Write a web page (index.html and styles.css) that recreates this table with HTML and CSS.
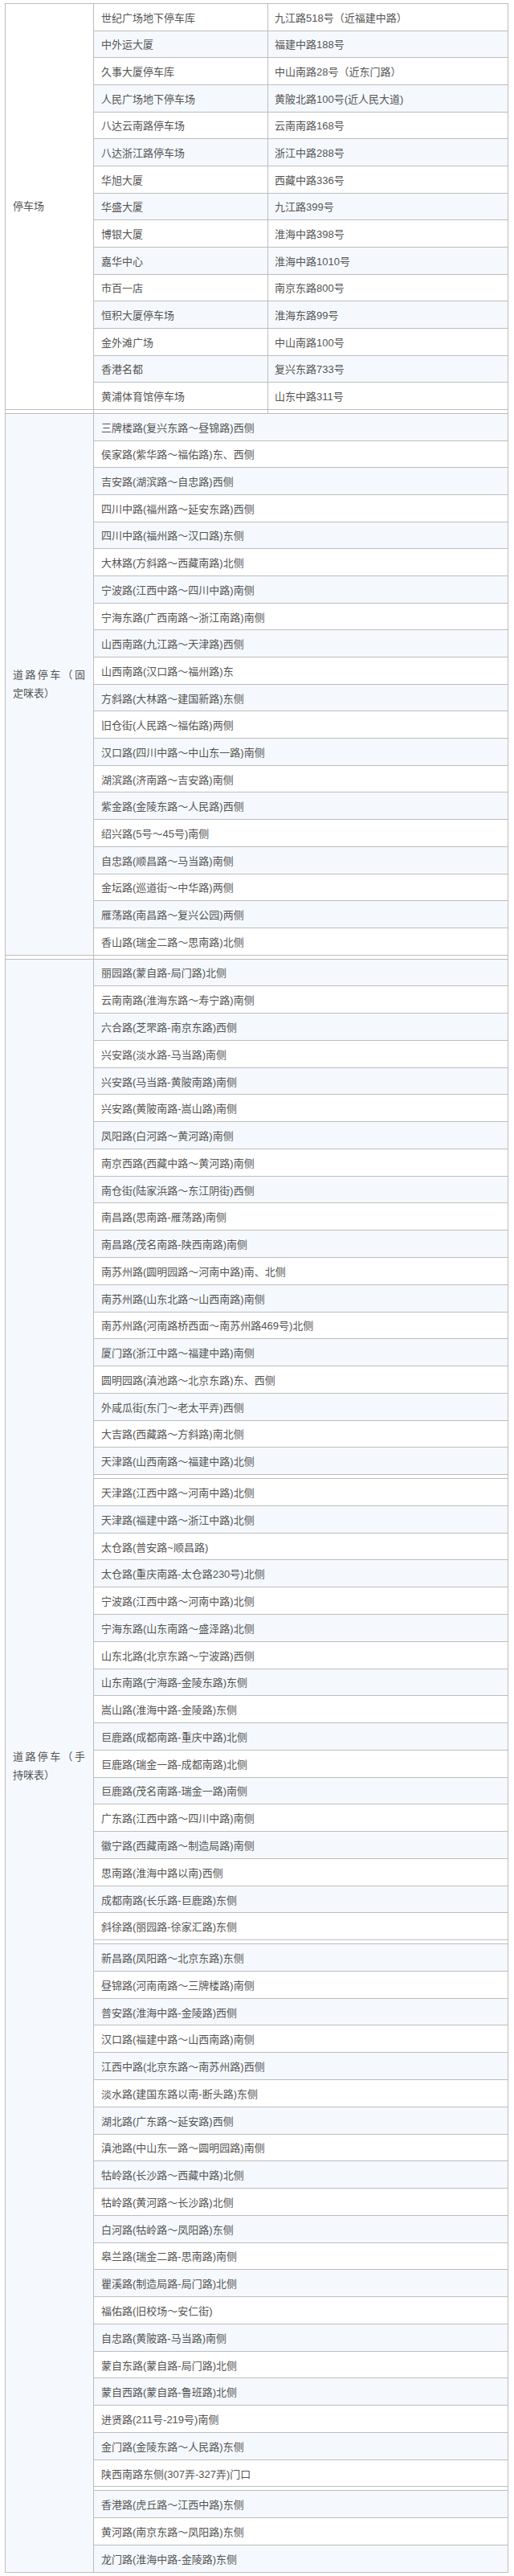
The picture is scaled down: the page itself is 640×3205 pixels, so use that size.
FILE: index.html
```html
<!DOCTYPE html>
<html lang="zh-CN">
<head>
<meta charset="utf-8">
<title>黄浦区停车场及道路停车</title>
<link rel="stylesheet" href="styles.css">
</head>
<body>
<div class="sheet">

  <section class="block block-lots">
    <div class="cat"><p>停车场</p></div>
    <div class="rows">
      <div class="row"><div class="name">世纪广场地下停车库</div><div class="addr">九江路518号（近福建中路）</div></div>
      <div class="row"><div class="name">中外运大厦</div><div class="addr">福建中路188号</div></div>
      <div class="row"><div class="name">久事大厦停车库</div><div class="addr">中山南路28号（近东门路）</div></div>
      <div class="row"><div class="name">人民广场地下停车场</div><div class="addr">黄陂北路100号(近人民大道)</div></div>
      <div class="row"><div class="name">八达云南路停车场</div><div class="addr">云南南路168号</div></div>
      <div class="row"><div class="name">八达浙江路停车场</div><div class="addr">浙江中路288号</div></div>
      <div class="row"><div class="name">华旭大厦</div><div class="addr">西藏中路336号</div></div>
      <div class="row"><div class="name">华盛大厦</div><div class="addr">九江路399号</div></div>
      <div class="row"><div class="name">博银大厦</div><div class="addr">淮海中路398号</div></div>
      <div class="row"><div class="name">嘉华中心</div><div class="addr">淮海中路1010号</div></div>
      <div class="row"><div class="name">市百一店</div><div class="addr">南京东路800号</div></div>
      <div class="row"><div class="name">恒积大厦停车场</div><div class="addr">淮海东路99号</div></div>
      <div class="row"><div class="name">金外滩广场</div><div class="addr">中山南路100号</div></div>
      <div class="row"><div class="name">香港名都</div><div class="addr">复兴东路733号</div></div>
      <div class="row"><div class="name">黄浦体育馆停车场</div><div class="addr">山东中路311号</div></div>
    </div>
  </section>
  <div class="gap gap-3"><i></i><i></i><i></i></div>

  <section class="block block-fixed">
    <div class="cat"><p>道路停车（固定咪表）</p></div>
    <div class="rows">
      <div class="row">三牌楼路(复兴东路～昼锦路)西侧</div>
      <div class="row">侯家路(紫华路～福佑路)东、西侧</div>
      <div class="row">吉安路(湖滨路～自忠路)西侧</div>
      <div class="row">四川中路(福州路～延安东路)西侧</div>
      <div class="row">四川中路(福州路～汉口路)东侧</div>
      <div class="row">大林路(方斜路～西藏南路)北侧</div>
      <div class="row">宁波路(江西中路～四川中路)南侧</div>
      <div class="row">宁海东路(广西南路～浙江南路)南侧</div>
      <div class="row">山西南路(九江路～天津路)西侧</div>
      <div class="row">山西南路(汉口路～福州路)东</div>
      <div class="row">方斜路(大林路～建国新路)东侧</div>
      <div class="row">旧仓街(人民路～福佑路)两侧</div>
      <div class="row">汉口路(四川中路～中山东一路)南侧</div>
      <div class="row">湖滨路(济南路～吉安路)南侧</div>
      <div class="row">紫金路(金陵东路～人民路)西侧</div>
      <div class="row">绍兴路(5号～45号)南侧</div>
      <div class="row">自忠路(顺昌路～马当路)南侧</div>
      <div class="row">金坛路(巡道街～中华路)两侧</div>
      <div class="row">雁荡路(南昌路～复兴公园)两侧</div>
      <div class="row">香山路(瑞金二路～思南路)北侧</div>
    </div>
  </section>
  <div class="gap gap-2"><i></i><i></i></div>

  <section class="block block-hand">
    <div class="cat"><p>道路停车（手持咪表）</p></div>
    <div class="rows">
      <div class="row">丽园路(蒙自路-局门路)北侧</div>
      <div class="row">云南南路(淮海东路～寿宁路)南侧</div>
      <div class="row">六合路(芝罘路-南京东路)西侧</div>
      <div class="row">兴安路(淡水路-马当路)南侧</div>
      <div class="row">兴安路(马当路-黄陂南路)南侧</div>
      <div class="row">兴安路(黄陂南路-嵩山路)南侧</div>
      <div class="row">凤阳路(白河路～黄河路)南侧</div>
      <div class="row">南京西路(西藏中路～黄河路)南侧</div>
      <div class="row">南仓街(陆家浜路～东江阴街)西侧</div>
      <div class="row">南昌路(思南路-雁荡路)南侧</div>
      <div class="row">南昌路(茂名南路-陕西南路)南侧</div>
      <div class="row">南苏州路(圆明园路～河南中路)南、北侧</div>
      <div class="row">南苏州路(山东北路～山西南路)南侧</div>
      <div class="row">南苏州路(河南路桥西面～南苏州路469号)北侧</div>
      <div class="row">厦门路(浙江中路～福建中路)南侧</div>
      <div class="row">圆明园路(滇池路～北京东路)东、西侧</div>
      <div class="row">外咸瓜街(东门～老太平弄)西侧</div>
      <div class="row">大吉路(西藏路～方斜路)南北侧</div>
      <div class="row">天津路(山西南路～福建中路)北侧</div>
      <hr class="seam">
      <div class="row">天津路(江西中路～河南中路)北侧</div>
      <div class="row">天津路(福建中路～浙江中路)北侧</div>
      <div class="row">太仓路(普安路~顺昌路)</div>
      <div class="row">太仓路(重庆南路-太仓路230号)北侧</div>
      <div class="row">宁波路(江西中路～河南中路)北侧</div>
      <div class="row">宁海东路(山东南路～盛泽路)北侧</div>
      <div class="row">山东北路(北京东路～宁波路)西侧</div>
      <div class="row">山东南路(宁海路-金陵东路)东侧</div>
      <div class="row">嵩山路(淮海中路-金陵路)东侧</div>
      <div class="row">巨鹿路(成都南路-重庆中路)北侧</div>
      <div class="row">巨鹿路(瑞金一路-成都南路)北侧</div>
      <div class="row">巨鹿路(茂名南路-瑞金一路)南侧</div>
      <div class="row">广东路(江西中路～四川中路)南侧</div>
      <div class="row">徽宁路(西藏南路～制造局路)南侧</div>
      <div class="row">思南路(淮海中路以南)西侧</div>
      <div class="row">成都南路(长乐路-巨鹿路)东侧</div>
      <div class="row">斜徐路(丽园路-徐家汇路)东侧</div>
      <hr class="seam">
      <div class="row">新昌路(凤阳路～北京东路)东侧</div>
      <div class="row">昼锦路(河南南路～三牌楼路)南侧</div>
      <div class="row">普安路(淮海中路-金陵路)西侧</div>
      <div class="row">汉口路(福建中路～山西南路)南侧</div>
      <div class="row">江西中路(北京东路～南苏州路)西侧</div>
      <div class="row">淡水路(建国东路以南-断头路)东侧</div>
      <div class="row">湖北路(广东路～延安路)西侧</div>
      <div class="row">滇池路(中山东一路～圆明园路)南侧</div>
      <div class="row">牯岭路(长沙路～西藏中路)北侧</div>
      <div class="row">牯岭路(黄河路～长沙路)北侧</div>
      <div class="row">白河路(牯岭路～凤阳路)东侧</div>
      <div class="row">皋兰路(瑞金二路-思南路)南侧</div>
      <div class="row">瞿溪路(制造局路-局门路)北侧</div>
      <div class="row">福佑路(旧校场～安仁街)</div>
      <div class="row">自忠路(黄陂路-马当路)南侧</div>
      <div class="row">蒙自东路(蒙自路-局门路)北侧</div>
      <div class="row">蒙自西路(蒙自路-鲁班路)北侧</div>
      <div class="row">进贤路(211号-219号)南侧</div>
      <div class="row">金门路(金陵东路～人民路)东侧</div>
      <div class="row">陕西南路东侧(307弄-327弄)门口</div>
      <hr class="seam">
      <div class="row">香港路(虎丘路～江西中路)东侧</div>
      <div class="row">黄河路(南京东路～凤阳路)东侧</div>
      <div class="row">龙门路(淮海中路-金陵路)东侧</div>
    </div>
  </section>

</div>
</body>
</html>
```

FILE: styles.css
```css
html, body {
  margin: 0;
  padding: 0;
  background: #ffffff;
}

body {
  padding: 4px 7px 0 6px;
  font-family: "Liberation Sans", "Noto Sans CJK SC", sans-serif;
  font-size: 13px;
  color: #555555;
}

.sheet {
  display: flex;
  flex-direction: column;
}

.block {
  display: grid;
  grid-template-columns: 110px 1fr;
  border-top: 1px solid #bdbdbd;
  border-left: 1px solid #bdbdbd;
  border-right: 1px solid #bdbdbd;
}

.cat {
  display: flex;
  align-items: center;
  box-sizing: border-box;
  padding: 0 10px 0 9px;
  border-right: 1px solid #bdbdbd;
  border-bottom: 1px solid #bdbdbd;
}

.cat p {
  margin: 0;
  width: 100%;
  line-height: 23px;
  text-align: justify;
}

.block-fixed .cat,
.block-hand .cat {
  background: #f5f9fe;
}

.rows {
  display: flex;
  flex-direction: column;
}

.row {
  box-sizing: border-box;
  display: flex;
  align-items: center;
  height: var(--rh);
  padding-left: 9px;
  border-bottom: 1px solid #bdbdbd;
  white-space: nowrap;
}

.block-lots { --rh: 33.67px; }
.block-fixed { --rh: 33.7px; }
.block-hand { --rh: 33.78px; }

.block-lots .row {
  padding-left: 0;
}

.block-lots .row:nth-of-type(even) {
  background: #f5f9fe;
}

.block-fixed .row:nth-of-type(odd),
.block-hand .row:nth-of-type(odd) {
  background: #f5f9fe;
}

.name {
  box-sizing: border-box;
  width: 217px;
  height: 100%;
  display: flex;
  align-items: center;
  padding-left: 9px;
  border-right: 1px solid #bdbdbd;
}

.addr {
  display: flex;
  align-items: center;
  padding-left: 8px;
}

.seam {
  margin: 0;
  border: 0;
  height: 4px;
  background: #ffffff;
  border-bottom: 1px solid #bdbdbd;
}

.gap {
  display: grid;
  height: 4px;
  border-left: 1px solid #bdbdbd;
  border-right: 1px solid #bdbdbd;
  background: #ffffff;
}

.gap-3 {
  grid-template-columns: 110px 217px 1fr;
}

.gap-2 {
  grid-template-columns: 110px 1fr;
}

.gap i {
  box-sizing: border-box;
  border-right: 1px solid #bdbdbd;
}

.gap i:last-child {
  border-right: 0;
}
```
